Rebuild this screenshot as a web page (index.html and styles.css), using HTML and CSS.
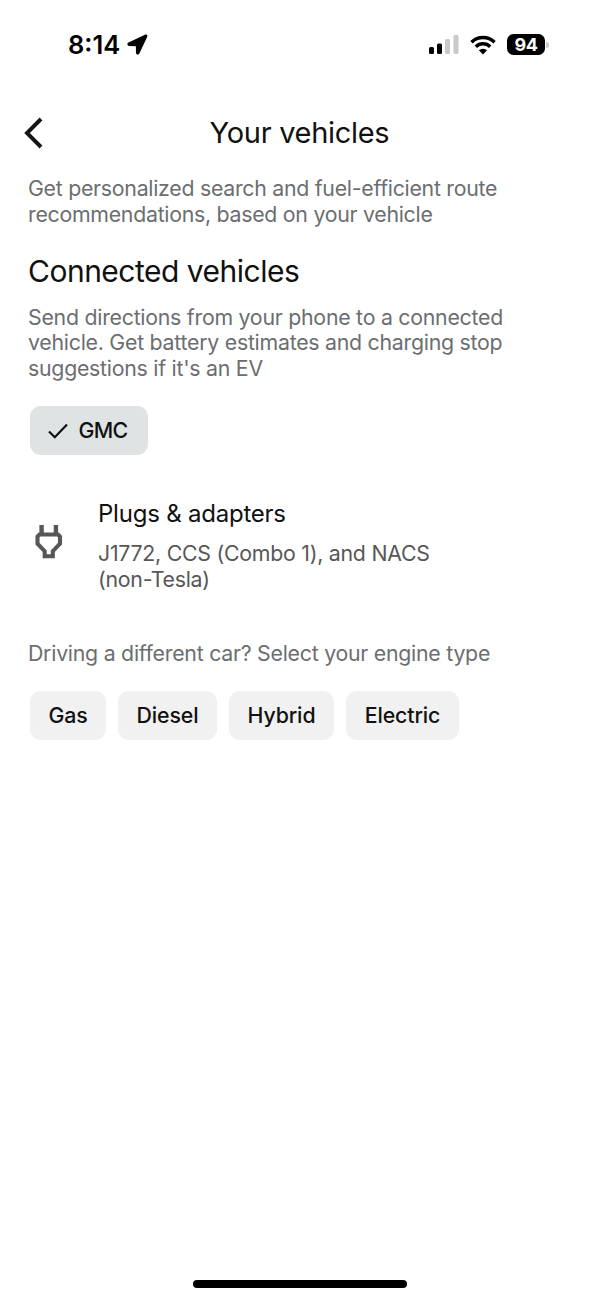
FILE: index.html
```html
<!DOCTYPE html>
<html lang="en">
<head>
<meta charset="utf-8">
<meta name="viewport" content="width=device-width, initial-scale=1">
<title>Your vehicles</title>
<link rel="stylesheet" href="styles.css">
</head>
<body>
<div class="screen">
  <header class="status">
    <div class="clock"><span class="time">8:14</span>
      <svg class="location" viewBox="0 0 22 22"><path d="M19.7 1.3 1.9 9.7C.8 10.2 1 11.7 2.3 11.8l7.2.2c.4 0 .6.2.6.6l.1 7.1c0 1.3 1.5 1.5 2 .4l8.2-17.3c.5-1.1-.2-1.9-.7-1.5z" fill="#000" stroke="#000" stroke-width="1.6" stroke-linejoin="round"/></svg>
    </div>
    <div class="indicators">
      <svg class="signal" viewBox="0 0 30 20"><rect x="0" y="12" width="5" height="7" rx="1.5"/><rect x="8" y="8.5" width="5" height="10.5" rx="1.5"/><g fill="#c8c8c8"><rect x="16" y="4" width="5" height="15" rx="1.5"/><rect x="24.5" y="0" width="5" height="19" rx="1.5"/></g></svg>
      <svg class="wifi" viewBox="0 0 26 20"><g fill="none" stroke="#000" stroke-width="3.5"><path d="M1.5 7.2a16.5 16.5 0 0 1 23 0"/><path d="M5.8 11.7a10.2 10.2 0 0 1 14.4 0"/></g><path d="M13 19.4 8.9 15.3a5.9 5.9 0 0 1 8.2 0z"/></svg>
      <div class="battery"><span class="charge">94</span><i class="terminal"></i></div>
    </div>
  </header>
  <nav class="bar">
    <svg class="back" viewBox="0 0 20 32"><path d="M17 2 3 16l14 14" fill="none" stroke="#161616" stroke-width="3.9"/></svg>
    <h1 class="title">Your vehicles</h1>
  </nav>
  <main class="content">
    <p class="copy intro">Get personalized search and fuel-efficient route<br>recommendations, based on your vehicle</p>
    <h2 class="heading">Connected vehicles</h2>
    <p class="copy connected">Send directions from your phone to a connected<br>vehicle. Get battery estimates and charging stop<br>suggestions if it's an EV</p>
    <button class="chip selected"><svg class="check" viewBox="0 0 20 16"><path d="m1 8.5 5.8 5.7L19 1.5" fill="none" stroke="#111" stroke-width="2.2"/></svg><span>GMC</span></button>
    <section class="plugs">
      <svg class="plug" viewBox="0 0 28 34"><path d="M6.6 0v10M20.9 0v10" stroke="#575757" stroke-width="4.4"/><path d="M4.5 9.5H23l2 2v7.2l-7.2 7.5v5h-8.1v-5L2.5 18.7v-7.2z" fill="none" stroke="#575757" stroke-width="4.1"/></svg>
      <div><h3 class="plugs-title">Plugs &amp; adapters</h3><p class="copy plugs-copy">J1772, CCS (Combo 1), and NACS<br>(non-Tesla)</p></div>
    </section>
    <p class="copy prompt">Driving a different car? Select your engine type</p>
    <div class="chips"><button class="chip gas">Gas</button><button class="chip diesel">Diesel</button><button class="chip hybrid">Hybrid</button><button class="chip electric">Electric</button></div>
  </main>
  <footer class="home"></footer>
</div>
</body>
</html>
```
FILE: styles.css
```css
* { box-sizing: border-box; }
body, h1, h2, h3, p { margin: 0; }
body { background: #fff; color: #111; font-family: Inter, "Liberation Sans", sans-serif; }
svg { display: block; flex: none; }
.screen { height: 1300px; display: flex; flex-direction: column; }
.status { height: 89px; padding: 0 50px 0 68px; display: flex; justify-content: space-between; align-items: center; }
.clock { display: flex; align-items: center; gap: 7px; color: #000; }
.time { font-size: 25.5px; line-height: 30px; font-weight: 600; }
.location { width: 21px; height: 21px; }
.indicators { display: flex; align-items: center; }
.signal { width: 30px; height: 20px; }
.wifi { width: 26px; height: 20px; margin: 0 11px; }
.battery { display: flex; align-items: center; gap: 1px; }
.charge { width: 38px; height: 21px; border-radius: 6.5px; background: #000; color: #fff; font-size: 18px; line-height: 21px; font-weight: 700; text-align: center; letter-spacing: -.4px; }
.terminal { width: 3px; height: 6px; border-radius: 0 3px 3px 0; background: #c8c8c8; }
.bar { height: 87.4px; padding: 0 24px; display: grid; grid-template-columns: 20px 1fr 20px; align-items: center; }
.back { width: 20px; height: 32px; }
.title { font-size: 29px; line-height: 34px; font-weight: 400; text-align: center; letter-spacing: -.3px; white-space: nowrap; }
.content { padding: 0 28px; white-space: nowrap; flex: 1; }
.copy { font-size: 21.3px; line-height: 25.6px; letter-spacing: -.25px; color: #6b6e70; }
.intro { letter-spacing: -.27px; }
.heading { font-size: 30px; line-height: 36px; font-weight: 400; letter-spacing: -.5px; margin-top: 25.6px; }
.connected { margin-top: 15.6px; }
.chip { border: 0; border-radius: 11px; height: 49px; background: #f1f1f1; color: #111; font: 500 21.3px/49px Inter, sans-serif; letter-spacing: -.1px; padding: 0; display: flex; align-items: center; justify-content: center; }
.selected { width: 118px; margin: 24.6px 0 0 2px; padding-right: 2px; background: #dfe3e3; gap: 10px; letter-spacing: -.6px; }
.check { width: 20px; height: 16px; }
.plugs { display: flex; margin-top: 44px; padding-left: 7px; gap: 35px; align-items: flex-start; }
.plug { width: 28px; height: 34px; margin-top: 26px; }
.plugs-title { font-size: 24px; line-height: 30px; font-weight: 400; letter-spacing: -.22px; }
.plugs-copy { color: #575757; margin-top: 12px; }
.prompt { margin-top: 49px; }
.chips { display: flex; gap: 12px; margin: 24px 0 0 2px; }
.gas { width: 76px; }
.diesel { width: 99px; }
.hybrid { width: 105px; }
.electric { width: 113px; }
.home { width: 214px; height: 8px; border-radius: 4px; background: #000; margin: 0 auto 12px; }
```
